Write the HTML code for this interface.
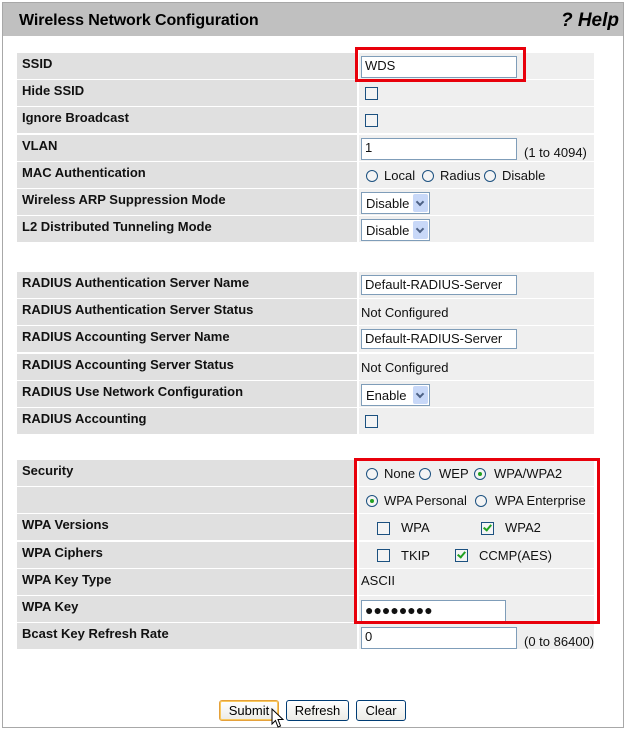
<!DOCTYPE html>
<html><head><meta charset="utf-8"><style>
body{margin:0;width:626px;height:729px;background:#fff;font-family:"Liberation Sans",Arial,sans-serif;position:relative;overflow:hidden}
.abs{position:absolute}
.frame{left:2px;top:2px;width:620px;height:724px;border:1px solid #a8a8a8}
.hdr{left:3px;top:3px;width:620px;height:33px;background:#c0c0c0}
.hdr .t{position:absolute;left:16px;top:9px;font-weight:bold;font-size:16px;color:#000;letter-spacing:-0.1px}
.hdr .h{position:absolute;right:4px;top:7px;font-weight:bold;font-style:italic;font-size:19px}
.l{position:absolute;left:17px;width:340px;height:26px;background:#e0e0e0;font-weight:bold;font-size:13px;color:#111}
.l span{position:absolute;left:5px;top:3px}
.v{position:absolute;left:359px;width:235px;height:26px;background:#efefef;font-size:13px;color:#111}
.inp{position:absolute;left:2px;top:3px;height:20px;border:1px solid #7f9db9;background:#fff;box-sizing:border-box;font-size:13px;padding-left:3px;line-height:18px}
.cb{position:absolute;width:11px;height:11px;border:1px solid #1c5180;background:#f4f4f4}
.cb.on::after{content:"";position:absolute;left:3px;top:0px;width:3px;height:6px;border:solid #21a121;border-width:0 2px 2px 0;transform:rotate(40deg)}
.rd{position:absolute;width:10px;height:10px;border:1px solid #1c5180;border-radius:50%;background:#f4f4f4}
.rd.on::after{content:"";position:absolute;left:3px;top:3px;width:4px;height:4px;border-radius:50%;background:#21a121}
.tx{position:absolute;top:6px;white-space:nowrap}
.sel{position:absolute;left:2px;top:3px;width:69px;height:22px;border:1px solid #7f9db9;background:#fff;box-sizing:border-box;font-size:13px}
.sel span{position:absolute;left:4px;top:3px}
.sel i{position:absolute;right:1px;top:1px;width:15px;height:18px;background:#c8d8f8;border-radius:2px}
.sel i::after{content:"";position:absolute;left:4px;top:5px;width:4px;height:4px;border:solid #4d6185;border-width:0 2px 2px 0;transform:rotate(45deg)}
.red{position:absolute;border:3px solid #e8000b}
.btn{position:absolute;top:700px;height:21px;border:1px solid #003c74;border-radius:3px;background:linear-gradient(#fff,#ecebe6);font-size:13px;text-align:center;line-height:20px;box-sizing:border-box}
</style></head><body>
<div class="abs frame"></div>
<div class="abs hdr"><div class="t">Wireless Network Configuration</div><div class="h">? Help</div></div>

<div class="l" style="top:53px"><span>SSID</span></div>
<div class="v" style="top:53px"><div class="inp" style="width:156px;height:22px;top:3px">WDS</div></div>
<div class="l" style="top:80px"><span>Hide SSID</span></div>
<div class="v" style="top:80px"><div class="cb" style="left:6px;top:7px"></div></div>
<div class="l" style="top:107px"><span>Ignore Broadcast</span></div>
<div class="v" style="top:107px"><div class="cb" style="left:6px;top:7px"></div></div>
<div class="l" style="top:135px"><span>VLAN</span></div>
<div class="v" style="top:135px"><div class="inp" style="width:156px;height:22px;top:3px">1</div><span class="tx" style="left:165px;top:10px">(1 to 4094)</span></div>
<div class="l" style="top:162px"><span>MAC Authentication</span></div>
<div class="v" style="top:162px"><div class="rd" style="left:7px;top:8px"></div><span class="tx" style="left:25px">Local</span><div class="rd" style="left:63px;top:8px"></div><span class="tx" style="left:81px">Radius</span><div class="rd" style="left:125px;top:8px"></div><span class="tx" style="left:143px">Disable</span></div>
<div class="l" style="top:189px"><span>Wireless ARP Suppression Mode</span></div>
<div class="v" style="top:189px"><div class="sel"><span>Disable</span><i></i></div></div>
<div class="l" style="top:216px"><span>L2 Distributed Tunneling Mode</span></div>
<div class="v" style="top:216px"><div class="sel"><span>Disable</span><i></i></div></div>

<div class="l" style="top:272px"><span>RADIUS Authentication Server Name</span></div>
<div class="v" style="top:272px"><div class="inp" style="width:156px">Default-RADIUS-Server</div></div>
<div class="l" style="top:299px"><span>RADIUS Authentication Server Status</span></div>
<div class="v" style="top:299px"><span class="tx" style="left:2px">Not Configured</span></div>
<div class="l" style="top:326px"><span>RADIUS Accounting Server Name</span></div>
<div class="v" style="top:326px"><div class="inp" style="width:156px">Default-RADIUS-Server</div></div>
<div class="l" style="top:354px"><span>RADIUS Accounting Server Status</span></div>
<div class="v" style="top:354px"><span class="tx" style="left:2px">Not Configured</span></div>
<div class="l" style="top:381px"><span>RADIUS Use Network Configuration</span></div>
<div class="v" style="top:381px"><div class="sel"><span>Enable</span><i></i></div></div>
<div class="l" style="top:408px"><span>RADIUS Accounting</span></div>
<div class="v" style="top:408px"><div class="cb" style="left:6px;top:7px"></div></div>

<div class="l" style="top:460px"><span>Security</span></div>
<div class="v" style="top:460px"><div class="rd" style="left:7px;top:8px"></div><span class="tx" style="left:25px">None</span><div class="rd" style="left:60px;top:8px"></div><span class="tx" style="left:80px">WEP</span><div class="rd on" style="left:115px;top:8px"></div><span class="tx" style="left:135px">WPA/WPA2</span></div>
<div class="l" style="top:487px"><span></span></div>
<div class="v" style="top:487px"><div class="rd on" style="left:7px;top:8px"></div><span class="tx" style="left:25px">WPA Personal</span><div class="rd" style="left:116px;top:8px"></div><span class="tx" style="left:136px">WPA Enterprise</span></div>
<div class="l" style="top:514px"><span>WPA Versions</span></div>
<div class="v" style="top:514px"><div class="cb" style="left:18px;top:8px"></div><span class="tx" style="left:42px">WPA</span><div class="cb on" style="left:122px;top:8px"></div><span class="tx" style="left:146px">WPA2</span></div>
<div class="l" style="top:542px"><span>WPA Ciphers</span></div>
<div class="v" style="top:542px"><div class="cb" style="left:18px;top:7px"></div><span class="tx" style="left:42px">TKIP</span><div class="cb on" style="left:96px;top:7px"></div><span class="tx" style="left:120px">CCMP(AES)</span></div>
<div class="l" style="top:569px"><span>WPA Key Type</span></div>
<div class="v" style="top:569px"><span class="tx" style="left:2px;top:4px">ASCII</span></div>
<div class="l" style="top:596px"><span>WPA Key</span></div>
<div class="v" style="top:596px"><div class="inp" style="width:145px;height:22px;top:4px;font-size:14px">●●●●●●●●</div></div>
<div class="l" style="top:623px"><span>Bcast Key Refresh Rate</span></div>
<div class="v" style="top:623px"><div class="inp" style="width:156px;height:22px;top:4px">0</div><span class="tx" style="left:165px;top:11px">(0 to 86400)</span></div>

<div class="red" style="left:355px;top:47px;width:165px;height:29px"></div>
<div class="red" style="left:354px;top:458px;width:240px;height:160px"></div>

<div class="btn" style="left:219px;width:60px;border-color:#e5a13a;box-shadow:inset 0 0 0 1px #f8c85c">Submit</div>
<div class="btn" style="left:286px;width:63px">Refresh</div>
<div class="btn" style="left:356px;width:50px">Clear</div>
<svg class="abs" style="left:271px;top:708px" width="14" height="21" viewBox="0 0 14 21"><path d="M1 1 L1 16 L4.5 12.5 L7 19 L9.5 18 L7 11.5 L12 11.5 Z" fill="#fff" stroke="#000" stroke-width="1"/></svg>
</body></html>
